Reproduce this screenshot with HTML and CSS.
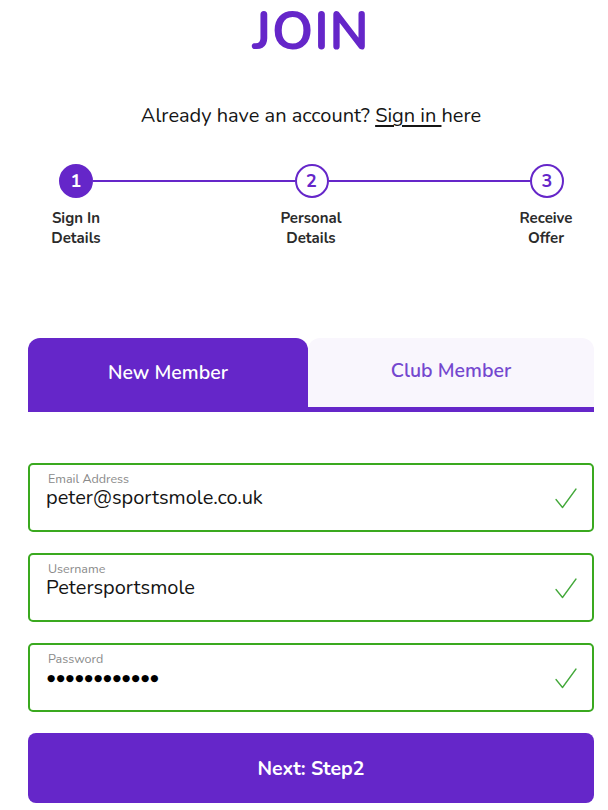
FILE: index.html
```html
<!DOCTYPE html>
<html lang="en">
<head>
<meta charset="utf-8">
<title>Join</title>
<link rel="stylesheet" href="styles.css">
</head>
<body>
<main class="page">
  <h1 class="title">JOIN</h1>
  <p class="signin">Already have an account? <a class="signin-link" href="#">Sign in </a>here</p>

  <section class="stepper">
    <div class="step-circles">
      <span class="circle active">1</span>
      <span class="connector"></span>
      <span class="circle">2</span>
      <span class="connector"></span>
      <span class="circle">3</span>
    </div>
    <div class="step-labels">
      <span class="step-label">Sign In<br>Details</span>
      <span class="step-label">Personal<br>Details</span>
      <span class="step-label">Receive<br>Offer</span>
    </div>
  </section>

  <nav class="tabs">
    <div class="tab tab-active">New Member</div>
    <div class="tab tab-inactive">Club Member</div>
  </nav>

  <form class="form">
    <div class="field">
      <div class="field-text">
        <span class="field-label">Email Address</span>
        <span class="field-value">peter@sportsmole.co.uk</span>
      </div>
      <svg class="check" width="22" height="22" viewBox="0 0 22 22"><path d="M1 11.5 L7.5 19.5 L21 1" fill="none" stroke="#43a83a" stroke-width="1.3" stroke-linecap="round" stroke-linejoin="round"/></svg>
    </div>
    <div class="field">
      <div class="field-text">
        <span class="field-label">Username</span>
        <span class="field-value">Petersportsmole</span>
      </div>
      <svg class="check" width="22" height="22" viewBox="0 0 22 22"><path d="M1 11.5 L7.5 19.5 L21 1" fill="none" stroke="#43a83a" stroke-width="1.3" stroke-linecap="round" stroke-linejoin="round"/></svg>
    </div>
    <div class="field">
      <div class="field-text">
        <span class="field-label">Password</span>
        <span class="field-value dots">●●●●●●●●●●●●</span>
      </div>
      <svg class="check" width="22" height="22" viewBox="0 0 22 22"><path d="M1 11.5 L7.5 19.5 L21 1" fill="none" stroke="#43a83a" stroke-width="1.3" stroke-linecap="round" stroke-linejoin="round"/></svg>
    </div>
    <button class="next" type="button">Next: Step2</button>
  </form>
</main>
</body>
</html>
```

FILE: styles.css
```css
html, body {
  margin: 0;
  padding: 0;
  background: #ffffff;
}

body {
  font-family: "Nunito", Lato, "Open Sans", sans-serif;
  color: #1a1a1a;
}

.page {
  padding: 0 14px 0 28px;
}

.title {
  margin: 0;
  text-align: center;
  font-size: 53px;
  line-height: 64px;
  font-weight: 700;
  color: #6526c9;
  letter-spacing: 0.5px;
}

.signin {
  margin: 41px 0 0;
  text-align: center;
  font-size: 20px;
  line-height: 22px;
  color: #151515;
}

.signin-link {
  color: #151515;
  text-decoration: underline;
  text-underline-offset: 3px;
}

.stepper {
  margin-top: 37px;
}

.step-circles {
  display: flex;
  align-items: center;
  padding: 0 30px 0 31px;
}

.circle {
  box-sizing: border-box;
  width: 34px;
  height: 34px;
  border-radius: 50%;
  border: 2px solid #6526c9;
  background: #ffffff;
  color: #6526c9;
  display: flex;
  align-items: center;
  justify-content: center;
  font-size: 18px;
  font-weight: 700;
  flex: none;
}

.circle.active {
  background: #6526c9;
  color: #ffffff;
}

.connector {
  flex: 1;
  height: 2px;
  background: #6526c9;
}

.step-labels {
  display: flex;
  justify-content: space-between;
  margin-top: 10px;
}

.step-label {
  width: 96px;
  text-align: center;
  font-size: 15px;
  line-height: 20px;
  font-weight: 700;
  color: #2b2b2b;
}

.tabs {
  display: flex;
  align-items: flex-start;
  margin-top: 90px;
  border-bottom: 5px solid #6526c9;
}

.tab {
  display: flex;
  align-items: center;
  justify-content: center;
  font-size: 19.5px;
  font-weight: 600;
  border-radius: 12px 12px 0 0;
}

.tab-active {
  width: 280px;
  height: 69px;
  background: #6526c9;
  color: #ffffff;
}

.tab-inactive {
  flex: 1;
  height: 69px;
  padding-bottom: 4px;
  box-sizing: border-box;
  background: #f9f6fd;
  color: #7447cf;
}

.form {
  margin: 51px 0 0;
  display: flex;
  flex-direction: column;
  gap: 21px;
}

.field {
  box-sizing: border-box;
  height: 69px;
  border: 2px solid #3aa91f;
  border-radius: 5px;
  display: flex;
  align-items: center;
  padding: 0 15px 0 16px;
}

.field-text {
  flex: 1;
  align-self: flex-start;
  display: flex;
  flex-direction: column;
  padding-top: 6px;
}

.field-label {
  font-size: 12.5px;
  line-height: 15px;
  color: #8a8a8a;
  padding-left: 2px;
}

.field-value {
  font-size: 20px;
  line-height: 24px;
  color: #141414;
}

.field-value.dots {
  font-family: "DejaVu Sans", sans-serif;
  font-size: 9.5px;
  letter-spacing: 1.1px;
  color: #000000;
  line-height: 24px;
  padding-left: 1px;
}

.check {
  flex: none;
  margin-top: 2px;
}

.next {
  box-sizing: border-box;
  height: 70px;
  border: none;
  border-radius: 8px;
  background: #6526c9;
  color: #ffffff;
  font-family: inherit;
  font-size: 19.5px;
  font-weight: 700;
  cursor: pointer;
}
```
